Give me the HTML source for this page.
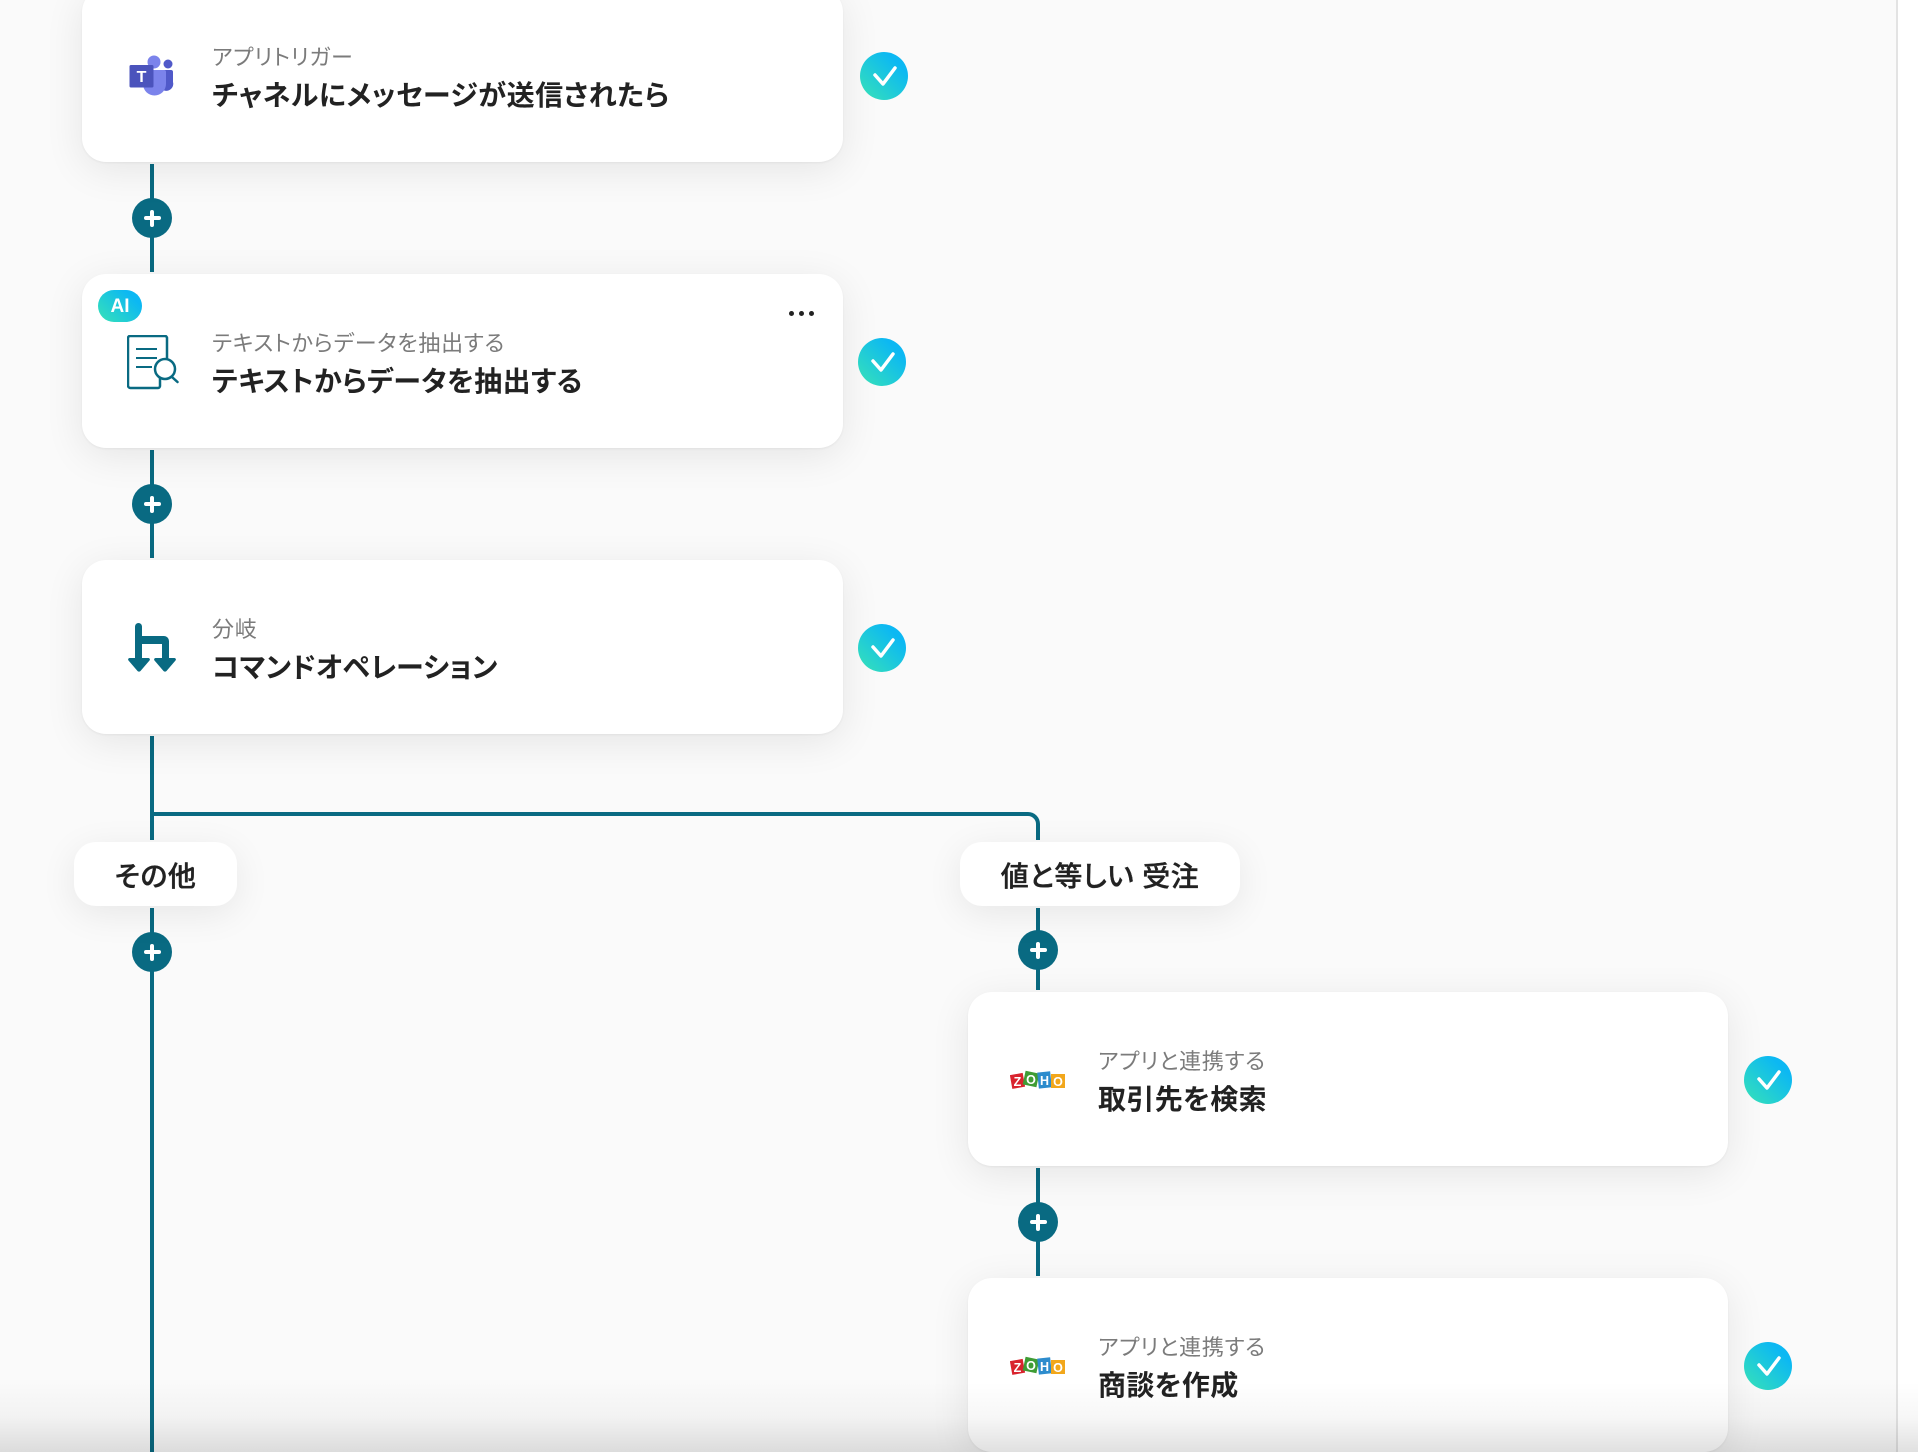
<!DOCTYPE html>
<html lang="ja"><head><meta charset="utf-8"><title>Flow</title>
<style>
html,body{margin:0;padding:0}
body{width:1918px;height:1452px;position:relative;overflow:hidden;background:#fafafa;font-family:"Liberation Sans","Noto Sans CJK JP",sans-serif;color:#222;font-feature-settings:"palt" 1}
.a{position:absolute}
.card{position:absolute;width:761px;height:174px;background:#fff;border-radius:24px;box-shadow:0 8px 40px rgba(0,0,0,.085),0 1px 2px rgba(0,0,0,.05)}
.sub{position:absolute;left:130px;top:55px;font-size:22px;line-height:30px;color:#7b7b7b;white-space:nowrap;letter-spacing:.75px}
.tt{position:absolute;left:130px;top:88px;font-size:28px;line-height:40px;font-weight:700;color:#222;white-space:nowrap;letter-spacing:.35px}
.v{position:absolute;width:4px;background:#096a82}
.h{position:absolute;height:4px;background:#096a82}
.plus{position:absolute;width:40px;height:40px;border-radius:50%;background:#096a82}
.plus:before{content:"";position:absolute;left:11.500px;top:17.750px;width:17px;height:4.500px;border-radius:2.250px;background:#fff}
.plus:after{content:"";position:absolute;left:17.750px;top:11.500px;width:4.500px;height:17px;border-radius:2.250px;background:#fff}
.chk{position:absolute;width:48px;height:48px;border-radius:50%;background:linear-gradient(45deg,#31dcc0 12%,#0cb8f3 78%)}
.chk svg{position:absolute;left:0;top:0}
.pill{position:absolute;height:64px;top:842px;background:#fff;border-radius:22px;box-shadow:0 8px 36px rgba(0,0,0,.08);text-align:center;font-size:28px;line-height:70px;font-weight:500;-webkit-text-stroke:.35px #222;color:#222;white-space:nowrap;letter-spacing:.5px}
</style></head><body>

<div class="v" style="left:150px;top:164px;height:108px"></div>
<div class="v" style="left:150px;top:450px;height:108px"></div>
<div class="v" style="left:150px;top:736px;height:104px"></div>
<div class="h" style="left:154px;top:812px;width:870px"></div>
<div class="a" style="left:1018px;top:812px;width:18px;height:24px;border-top:4px solid #096a82;border-right:4px solid #096a82;border-top-right-radius:12px;box-sizing:content-box"></div>
<div class="v" style="left:150px;top:908px;height:544px"></div>
<div class="v" style="left:1036px;top:908px;height:82px"></div>
<div class="v" style="left:1036px;top:1168px;height:108px"></div>

<div class="plus" style="left:132px;top:198px"></div>
<div class="plus" style="left:132px;top:484px"></div>
<div class="plus" style="left:132px;top:932px"></div>
<div class="plus" style="left:1018px;top:930px"></div>
<div class="plus" style="left:1018px;top:1202px"></div>

<!-- card 1 -->
<div class="card" style="left:82px;top:-12px">
<div class="sub">アプリトリガー</div><div class="tt" style="letter-spacing:.5px">チャネルにメッセージが送信されたら</div>
<svg class="a" style="left:46px;top:64px" width="48" height="48" viewBox="0 0 48 48">
<circle cx="40" cy="12" r="4.500" fill="#5059c9"/>
<path d="M32 18h11a2 2 0 0 1 2 2v10a7 7 0 0 1-13 5z" fill="#5059c9"/>
<circle cx="26" cy="10" r="6.500" fill="#7b83eb"/>
<path d="M15 18h21a2 2 0 0 1 2 2v12a11.500 11.500 0 0 1-23 0z" fill="#7b83eb"/>
<path d="M3 13h21a1.500 1.500 0 0 1 1.500 1.500V34a1.500 1.500 0 0 1-1.500 1.500H3A1.500 1.500 0 0 1 1.500 34V14.500A1.500 1.500 0 0 1 3 13z" fill="#4b53bc"/>
<text x="13.500" y="30" font-size="16" font-weight="700" fill="#fff" text-anchor="middle" font-family="Liberation Sans">T</text>
</svg>
</div>
<div class="chk" style="left:860px;top:52px"><svg width="48" height="48"><path d="M15 23l8 9 12-16" fill="none" stroke="#fff" stroke-width="3.500" stroke-linecap="round" stroke-linejoin="round"/></svg></div>

<!-- card 2 -->
<div class="card" style="left:82px;top:274px">
<div class="sub">テキストからデータを抽出する</div><div class="tt">テキストからデータを抽出する</div>
<div class="a" style="left:16px;top:16px;width:44px;height:32px;border-radius:16px;background:linear-gradient(45deg,#31dcc0 12%,#0cb8f3 78%);color:#fff;font-size:19px;line-height:33px;text-align:center;font-weight:700">AI</div>
<div class="a" style="left:707px;top:36.500px;width:5px;height:5px;border-radius:50%;background:#222;box-shadow:10px 0 0 #222,20px 0 0 #222"></div>
<svg class="a" style="left:45px;top:61px" width="56" height="60" viewBox="0 0 56 60" fill="none" stroke="#096a82" stroke-width="2.500">
<path d="M33 42.500V51a2 2 0 0 1-2 2H3.500a2.500 2.500 0 0 1-2.500-2.500V3a2 2 0 0 1 2-2H38a2 2 0 0 1 2 2v21"/>
<path d="M9 14h21M9 23h21M9 32h16" stroke-width="2"/>
<circle cx="38" cy="34" r="10"/>
<path d="M45 42l5.500 5" stroke-linecap="round"/>
</svg>
</div>
<div class="chk" style="left:858px;top:338px"><svg width="48" height="48"><path d="M15 23l8 9 12-16" fill="none" stroke="#fff" stroke-width="3.500" stroke-linecap="round" stroke-linejoin="round"/></svg></div>

<!-- card 3 -->
<div class="card" style="left:82px;top:560px">
<div class="sub">分岐</div><div class="tt" style="letter-spacing:.1px">コマンドオペレーション</div>
<svg class="a" style="left:46px;top:63px" width="48" height="50" viewBox="0 0 48 50" fill="#096a82">
<path d="M7 3.500a3.500 3.500 0 0 1 7 0V13H36a5 5 0 0 1 5 5V37h-7V21H14V37H7z"/>
<path d="M1.500 35h19a1.500 1.500 0 0 1 1 2.500L12.500 48a2 2 0 0 1-3 0L.5 37.500a1.500 1.500 0 0 1 1-2.500z"/>
<path d="M27.500 35h19a1.500 1.500 0 0 1 1 2.500L38.500 48a2 2 0 0 1-3 0L26.500 37.500a1.500 1.500 0 0 1 1-2.500z"/>
</svg>
</div>
<div class="chk" style="left:858px;top:624px"><svg width="48" height="48"><path d="M15 23l8 9 12-16" fill="none" stroke="#fff" stroke-width="3.500" stroke-linecap="round" stroke-linejoin="round"/></svg></div>

<!-- pills -->
<div class="pill" style="left:74px;width:163px">その他</div>
<div class="pill" style="left:960px;width:280px">値と等しい 受注</div>

<!-- card 4 -->
<div class="card" style="left:968px;top:992px;width:760px">
<div class="sub">アプリと連携する</div><div class="tt">取引先を検索</div>
<svg class="a" style="left:42px;top:78px" width="56" height="20" viewBox="0 0 56 20" font-family="Liberation Sans" font-size="12.500" font-weight="700" fill="#fff" text-anchor="middle">
<rect x="1" y="4" width="13" height="14" fill="#d9232e" transform="rotate(-10 7 11)"/>
<rect x="14" y="2" width="14" height="14" fill="#3f9c35" transform="rotate(12 21 9)"/>
<rect x="28" y="2" width="13" height="16" fill="#2d8ccd" transform="rotate(-6 34 10)"/>
<rect x="41" y="4" width="14" height="14" fill="#f2a71b"/>
<text x="7.500" y="16">Z</text><text x="21" y="14">O</text><text x="34.500" y="15">H</text><text x="48" y="16">O</text>
</svg>
</div>
<div class="chk" style="left:1744px;top:1056px"><svg width="48" height="48"><path d="M15 23l8 9 12-16" fill="none" stroke="#fff" stroke-width="3.500" stroke-linecap="round" stroke-linejoin="round"/></svg></div>

<!-- card 5 -->
<div class="card" style="left:968px;top:1278px;width:760px">
<div class="sub">アプリと連携する</div><div class="tt">商談を作成</div>
<svg class="a" style="left:42px;top:78px" width="56" height="20" viewBox="0 0 56 20" font-family="Liberation Sans" font-size="12.500" font-weight="700" fill="#fff" text-anchor="middle">
<rect x="1" y="4" width="13" height="14" fill="#d9232e" transform="rotate(-10 7 11)"/>
<rect x="14" y="2" width="14" height="14" fill="#3f9c35" transform="rotate(12 21 9)"/>
<rect x="28" y="2" width="13" height="16" fill="#2d8ccd" transform="rotate(-6 34 10)"/>
<rect x="41" y="4" width="14" height="14" fill="#f2a71b"/>
<text x="7.500" y="16">Z</text><text x="21" y="14">O</text><text x="34.500" y="15">H</text><text x="48" y="16">O</text>
</svg>
</div>
<div class="chk" style="left:1744px;top:1342px"><svg width="48" height="48"><path d="M15 23l8 9 12-16" fill="none" stroke="#fff" stroke-width="3.500" stroke-linecap="round" stroke-linejoin="round"/></svg></div>

<!-- right edge -->
<div class="a" style="left:1896px;top:0;width:2px;height:1452px;background:#e3e3e3"></div>
<div class="a" style="left:1898px;top:0;width:20px;height:1452px;background:#fff"></div>
<!-- bottom fade -->
<div class="a" style="left:0;top:1382px;width:1918px;height:70px;background:linear-gradient(to bottom,rgba(0,0,0,0),rgba(0,0,0,.03) 50%,rgba(0,0,0,.12))"></div>
</body></html>
